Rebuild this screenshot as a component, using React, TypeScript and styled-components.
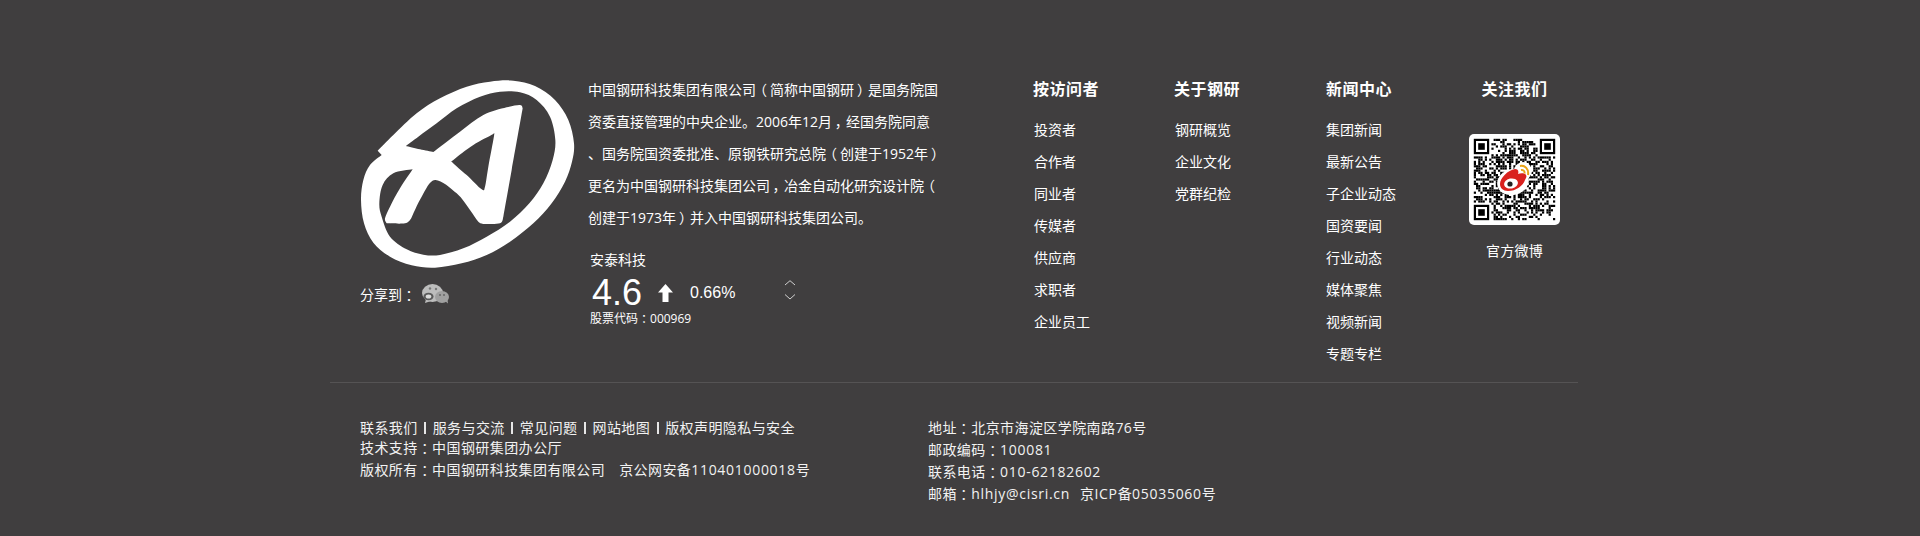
import React from "react";
import styled, { createGlobalStyle } from "styled-components";

const Global = createGlobalStyle`
  html, body { margin: 0; padding: 0; background: #403e3f; }
  body { font-family: "Open Sans", "Noto Sans CJK SC", "Liberation Sans", sans-serif; color: #fff; }
`;

const Page = styled.footer`
  box-sizing: border-box;
  height: 536px;
  padding: 74px 342px 0 330px;
  background: #403e3f;
  overflow: hidden;
`;
const TopRow = styled.section`
  display: flex;
  padding: 0 0 12px 30px;
  border-bottom: 1px solid #555354;
`;
const BrandColumn = styled.div`
  width: 228px;
  flex: none;
  padding-top: 6px;
`;
const LogoMark = styled.svg`
  display: block;
  width: 215px;
  height: 188px;
`;
const ShareRow = styled.div`
  display: flex;
  align-items: center;
  height: 20px;
  margin-top: 16px;
  font-size: 14px;
  gap: 5px;
`;
const IntroColumn = styled.div`
  width: 445px;
  flex: none;
`;
const IntroLine = styled.div`
  font-size: 14px;
  line-height: 32px;
  height: 32px;
  white-space: nowrap;
`;
/* Full-width marks sit in the middle of their cell in the original face:
   the proportional glyph is centred in a one-em cell. */
const Punct = styled.span`
  display: inline-block;
  width: 1em;
  text-align: center;
  font-feature-settings: "palt";
`;
const Latin = styled.span`
  letter-spacing: 0.7px;
`;
const Stock = styled.div`
  margin: 16px 0 0 2px;
`;
const StockName = styled.div`
  font-size: 14px;
  line-height: 20px;
`;
const PriceRow = styled.div`
  display: flex;
  align-items: center;
  height: 40px;
  margin-top: 3px;
  font-family: "Liberation Sans", Arial, sans-serif;
`;
const Price = styled.span`
  font-size: 36px;
  line-height: 40px;
  width: 68px;
  padding-left: 2px;
  box-sizing: border-box;
`;
const Change = styled.span`
  font-size: 16px;
  width: 94px;
  margin-left: 17px;
`;
const Stepper = styled.svg`
  width: 12px;
  height: 20px;
  margin-top: -6px;
`;
const StockCode = styled.div`
  font-size: 12px;
  line-height: 16px;
  margin-top: -2px;
`;
const NavGrid = styled.nav`
  display: grid;
  grid-template-columns: 141px 152px 143px 91px;
`;
const NavColumn = styled.div`
  display: flex;
  flex-direction: column;
`;
const NavTitle = styled.h3<{ $center?: boolean }>`
  margin: 0;
  height: 40px;
  font-size: 16px;
  font-weight: 700;
  letter-spacing: 0.5px;
  line-height: 30px;
  text-align: ${(p) => (p.$center ? "center" : "left")};
`;
const NavLink = styled.a<{ $flush?: boolean }>`
  font-size: 14px;
  line-height: 32px;
  height: 32px;
  padding-left: ${(p) => (p.$flush ? 0 : 1)}px;
  color: #fff;
  white-space: nowrap;
`;
const QrCard = styled.svg`
  display: block;
  width: 91px;
  height: 91px;
  margin-top: 20px;
  border-radius: 5px;
  background: #fff;
`;
const QrCaption = styled.div`
  margin-top: 16px;
  font-size: 14px;
  letter-spacing: 0.3px;
  line-height: 20px;
  text-align: center;
`;
const BottomRow = styled.section`
  display: flex;
  padding: 34px 0 0 30px;
  font-size: 14px;
  letter-spacing: 0.42px;
  color: #f2f2f2;
  white-space: nowrap;
  ${Punct} {
    width: calc(1em + 0.42px);
  }
`;
const LegalColumn = styled.div`
  width: 568px;
  flex: none;
`;
const ContactColumn = styled.div`
  margin-top: -1px;
`;
const TextRow = styled.div<{ $h?: number }>`
  display: flex;
  align-items: center;
  height: ${(p) => p.$h ?? 22}px;
`;
const Sep = styled.i`
  display: block;
  width: 2px;
  height: 12px;
  margin: 2px 6.5px 0;
  background: #e6e6e6;
`;
const Gap = styled.span<{ $w: number }>`
  display: inline-block;
  width: ${(p) => p.$w}px;
`;

const P = ({ t }: { t: string }) => (
  <>
    {t.split(/([，：（）])/).map((s, i) => (i % 2 ? <Punct key={i}>{s}</Punct> : s))}
  </>
);

const intro = [
  "中国钢研科技集团有限公司（简称中国钢研）是国务院国",
  "资委直接管理的中央企业。2006年12月，经国务院同意",
  "、国务院国资委批准、原钢铁研究总院（创建于1952年）",
  "更名为中国钢研科技集团公司，冶金自动化研究设计院（",
  "创建于1973年）并入中国钢研科技集团公司。",
];
const nav = [
  { title: "按访问者", links: ["投资者", "合作者", "同业者", "传媒者", "供应商", "求职者", "企业员工"] },
  { title: "关于钢研", links: ["钢研概览", "企业文化", "党群纪检"] },
  { title: "新闻中心", flush: true, links: ["集团新闻", "最新公告", "子企业动态", "国资要闻", "行业动态", "媒体聚焦", "视频新闻", "专题专栏"] },
];
const legal = ["联系我们", "服务与交流", "常见问题", "网站地图", "版权声明隐私与安全"];

type Pt = [number, number];
const curve = (p: Pt[]) => {
  let d = "";
  for (let i = 0; i < p.length - 1; i++) {
    const a = p[i - 1] ?? p[i];
    const b = p[i];
    const c = p[i + 1];
    const e = p[i + 2] ?? c;
    d += `C${b[0] + (c[0] - a[0]) / 6} ${b[1] + (c[1] - a[1]) / 6} ${c[0] - (e[0] - b[0]) / 6} ${c[1] - (e[1] - b[1]) / 6} ${c[0]} ${c[1]}`;
  }
  return d;
};
const outer: Pt[] = [[113, 272], [160, 225], [230, 160], [300, 115], [380, 80], [450, 65], [520, 62], [585, 78], [645, 120], [685, 180], [702, 250], [696, 305], [675, 365], [635, 430], [580, 490], [510, 545], [440, 585], [365, 610], [285, 623], [215, 616], [150, 590], [100, 548], [72, 490], [63, 420], [70, 360], [90, 315], [125, 285]];
const bowl: Pt[] = [[197, 258], [235, 230], [290, 190], [350, 145], [420, 110], [480, 95], [540, 97], [590, 120], [630, 170], [646, 240], [638, 300], [610, 370], [568, 430], [510, 485], [440, 530], [370, 565], [300, 585], [250, 584], [200, 568], [150, 530], [125, 470], [118, 430], [128, 375], [160, 340], [218, 328]];
const legL: Pt[] = [[218, 328], [180, 385], [150, 440], [135, 475], [140, 490]];
const legFoot: Pt[] = [[140, 490], [195, 490], [212, 478]];
const arch: Pt[] = [[212, 478], [245, 410], [285, 360], [350, 400], [390, 450], [415, 485], [432, 492]];
const foot: Pt[] = [[432, 492], [480, 490], [490, 470]];
const stem: Pt[] = [[490, 470], [515, 330], [548, 145]];
const cap: Pt[] = [[548, 145], [540, 135], [500, 142], [430, 165], [360, 215], [280, 276]];
const bar: Pt[] = [[280, 276], [240, 268], [197, 258]];
const tri: Pt[] = [[460, 222], [400, 255], [340, 300], [338, 308], [380, 345], [425, 388], [435, 380], [445, 320], [462, 228], [460, 222]];
const logoPath =
  `M113 272${curve(outer)}Z` +
  `M197 258${curve(bowl)}${curve(legL)}${curve(legFoot)}${curve(arch)}${curve(foot)}${curve(stem)}${curve(cap)}${curve(bar)}Z` +
  `M460 222${curve(tri)}Z`;

const Logo = () => (
  <LogoMark viewBox="60 60 645 564" aria-label="logo">
    <path fill="#fff" fillRule="evenodd" d={logoPath} />
  </LogoMark>
);

const WechatIcon = () => (
  <svg width="28" height="20" viewBox="0 0 28 20">
    <ellipse cx="11.5" cy="9" rx="10.5" ry="9" fill="#bdbdbd" />
    <ellipse cx="21" cy="13" rx="7" ry="6" fill="#a0a0a0" />
    <path d="M5 15l-1 4 6-2z" fill="#bdbdbd" />
    <path d="M24 17l3 2.5-.5-4z" fill="#a0a0a0" />
    <ellipse cx="7.5" cy="12.5" rx="5" ry="3.8" fill="#5a5a5a" />
    <ellipse cx="7.5" cy="12.5" rx="2.8" ry="2" fill="#dcdcdc" />
    <circle cx="9" cy="4.5" r="1.2" fill="#777" />
    <circle cx="15" cy="5" r="1.2" fill="#777" />
    <circle cx="19" cy="11" r="1" fill="#666" />
    <circle cx="23" cy="11" r="1" fill="#666" />
  </svg>
);

// A fixed pseudo-random module pattern for the QR drawing.
function qrModules(): [number, number][] {
  const n = 37;
  const out: [number, number][] = [];
  let s = 20240611;
  const rnd = () => {
    s = (s * 1664525 + 1013904223) >>> 0;
    return (s >>> 16) / 65536;
  };
  const inFinder = (x: number, y: number) =>
    (x < 8 && y < 8) || (x >= n - 8 && y < 8) || (x < 8 && y >= n - 8);
  for (let y = 0; y < n; y++) {
    for (let x = 0; x < n; x++) {
      const v = rnd();
      if (!inFinder(x, y) && v < 0.52) out.push([x, y]);
    }
  }
  return out;
}
const Finder = ({ x, y }: { x: number; y: number }) => (
  <>
    <rect x={x + 0.5} y={y + 0.5} width="6" height="6" fill="none" stroke="#000" />
    <rect x={x + 2} y={y + 2} width="3" height="3" fill="#000" />
  </>
);
const QrCode = () => (
  <QrCard viewBox="0 0 91 91">
    <g transform="translate(4.8 4.8) scale(2.2)">
      {qrModules().map(([x, y]) => (
        <rect key={`${x}-${y}`} x={x} y={y} width="1" height="1" fill="#000" />
      ))}
      <Finder x={0} y={0} />
      <Finder x={30} y={0} />
      <Finder x={0} y={30} />
    </g>
    <ellipse cx="44" cy="48" rx="16" ry="13" fill="#fff" transform="rotate(-15 44 48)" />
    <circle cx="54" cy="37" r="9" fill="#fff" />
    <path
      d="M31 50c0-6 8-14 15-15 3 0 4 2 3 5 3-1 7-1 8 1 1 2 0 3-1 5-2 6-9 11-17 11-5 0-8-3-8-7z"
      fill="#d9211e"
    />
    <ellipse cx="42" cy="49.5" rx="7" ry="5" fill="#fff" transform="rotate(-12 42 49.5)" />
    <circle cx="41" cy="50" r="2.6" fill="#222" />
    <path d="M51 32c5-1 9 3 8 9M52 36c2-.5 4 1 3.5 3.5" fill="none" stroke="#e8a317" strokeWidth="2" />
  </QrCard>
);

export default function App() {
  return (
    <Page>
      <Global />
      <TopRow>
        <BrandColumn>
          <Logo />
          <ShareRow>
            <span><P t="分享到：" /></span>
            <WechatIcon />
          </ShareRow>
        </BrandColumn>
        <IntroColumn>
          {intro.map((t) => (
            <IntroLine key={t}><P t={t} /></IntroLine>
          ))}
          <Stock>
            <StockName>安泰科技</StockName>
            <PriceRow>
              <Price>4.6</Price>
              <svg width="15" height="18" viewBox="0 0 15 18">
                <path d="M7.5 0L15 8.5H10.5V18H4.5V8.5H0Z" fill="#fff" />
              </svg>
              <Change>0.66%</Change>
              <Stepper viewBox="0 0 12 20">
                <path d="M1 5L6 .7 11 5M1 14.5L6 19 11 14.5" fill="none" stroke="#d0d0d0" />
              </Stepper>
            </PriceRow>
            <StockCode><P t="股票代码：000969" /></StockCode>
          </Stock>
        </IntroColumn>
        <NavGrid>
          {nav.map((c) => (
            <NavColumn key={c.title}>
              <NavTitle>{c.title}</NavTitle>
              {c.links.map((l) => (
                <NavLink key={l} $flush={c.flush}>{l}</NavLink>
              ))}
            </NavColumn>
          ))}
          <NavColumn>
            <NavTitle $center>关注我们</NavTitle>
            <QrCode />
            <QrCaption>官方微博</QrCaption>
          </NavColumn>
        </NavGrid>
      </TopRow>
      <BottomRow>
        <LegalColumn>
          <TextRow $h={20}>
            {legal.map((t, i) => (
              <React.Fragment key={t}>
                {i > 0 && <Sep />}
                <span>{t}</span>
              </React.Fragment>
            ))}
          </TextRow>
          <TextRow $h={20}><span><P t="技术支持：中国钢研集团办公厅" /></span></TextRow>
          <TextRow $h={23}>
            <span><P t="版权所有：中国钢研科技集团有限公司" /></span>
            <Gap $w={14} />
            <span>京公网安备<Latin>110401000018</Latin>号</span>
          </TextRow>
        </LegalColumn>
        <ContactColumn>
          <TextRow><span><P t="地址：北京市海淀区学院南路76号" /></span></TextRow>
          <TextRow><span><P t="邮政编码：" /><Latin>100081</Latin></span></TextRow>
          <TextRow><span><P t="联系电话：" /><Latin>010-62182602</Latin></span></TextRow>
          <TextRow>
            <span><P t="邮箱：" /><Latin>hlhjy@cisri.cn</Latin></span>
            <Gap $w={10} />
            <span>京<Latin>ICP</Latin>备<Latin>05035060</Latin>号</span>
          </TextRow>
        </ContactColumn>
      </BottomRow>
    </Page>
  );
}
